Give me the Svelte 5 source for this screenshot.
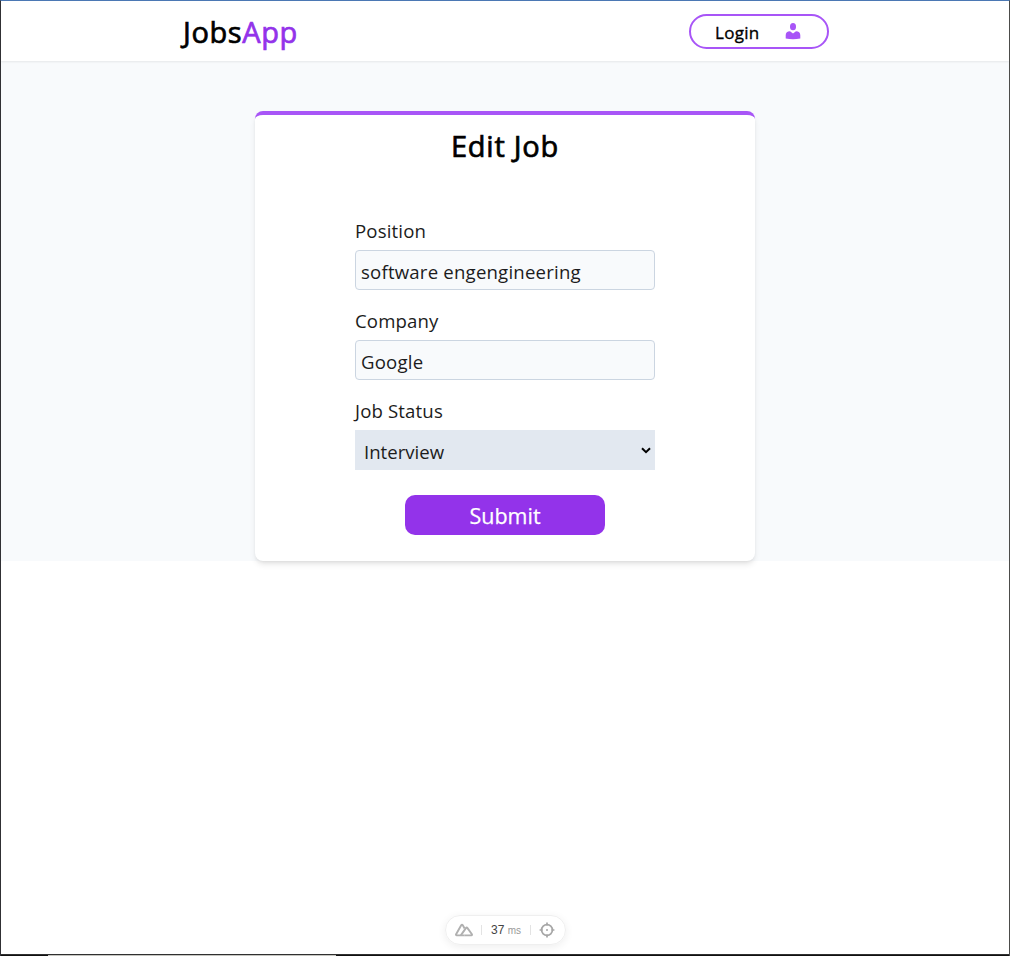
<script lang="ts">
  let position = $state('software engengineering');
  let company = $state('Google');
  let status = $state('Interview');
</script>

<div class="window">
  <header>
    <div class="brand">Jobs<span>App</span></div>
    <button class="login">
      <span>Login</span>
      <svg width="16" height="17" viewBox="0 0 16 17" fill="#a855f7">
        <ellipse cx="8" cy="3.7" rx="3" ry="3.6" />
        <path d="M.7 15.4V12.2C.7 9.5 2.3 8.4 5 8.2L8 10.5l3-2.3c2.7.2 4.3 1.3 4.3 4v3.2Q8 17 .7 15.4Z" />
      </svg>
    </button>
  </header>

  <main>
    <form onsubmit={(e) => e.preventDefault()}>
      <h1>Edit Job</h1>
      <div class="fields">
        <label for="position">Position</label>
        <input id="position" bind:value={position} />
        <label for="company">Company</label>
        <input id="company" bind:value={company} />
        <label for="status">Job Status</label>
        <div class="select">
          <select id="status" bind:value={status}>
            <option>Interview</option>
            <option>Pending</option>
            <option>Declined</option>
          </select>
          <svg width="10" height="7" viewBox="0 0 10 7" fill="none" stroke="#000" stroke-width="2">
            <path d="M1 1.2 5 5.2 9 1.2" />
          </svg>
        </div>
      </div>
      <button class="submit">Submit</button>
    </form>
  </main>

  <div class="devtools">
    <svg width="18" height="14" viewBox="0 0 18 14" fill="none" stroke="#b0b0b0" stroke-width="1.9" stroke-linejoin="round">
      <path d="M9.7 12.4H1.6Q.6 12.2 1.1 11.2L6.2 2.3Q7 1.1 7.8 2.3L9.6 5.4" />
      <path d="M5.8 12.4 10.9 5.1Q11.7 4 12.5 5.1L16.9 11.2Q17.3 12.2 16.3 12.4H9.7" />
    </svg>
    <i></i>
    <div class="time">37 <small>ms</small></div>
    <i></i>
    <svg width="16" height="16" viewBox="0 0 16 16" fill="none" stroke="#a6a6a6" stroke-width="1.7">
      <circle cx="8" cy="8" r="5.4" />
      <path d="M8 .6v3M8 12.4v3M.6 8h3M12.4 8h3" />
      <circle cx="8" cy="8" r="1" fill="#a6a6a6" stroke="none" />
    </svg>
  </div>
  <footer></footer>
</div>

<style>
  .window, .window * { box-sizing: border-box; }
  .window {
    height: 956px;
    display: flex;
    flex-direction: column;
    background: #fff;
    border-top: 1px solid #4b78b4;
    border-left: 1px solid #303034;
    border-right: 1px solid #4c4c4a;
    font-family: "Open Sans", "Noto Sans", sans-serif;
    color: #000;
    overflow: hidden;
  }
  header {
    height: 60px;
    flex: none;
    padding: 0 180px;
    display: flex;
    justify-content: space-between;
    align-items: center;
    position: relative;
    box-shadow: 0 1px 2px rgb(0 0 0 / 0.08);
  }
  .brand {
    font-size: 29px;
    line-height: 40px;
    margin-top: 1px;
    padding-left: 2px;
    letter-spacing: 0.6px;
    -webkit-text-stroke: 0.7px currentColor;
  }
  .brand span { color: #9333ea; }
  button, input, select { font-family: inherit; color: inherit; margin: 0; }
  .login {
    width: 140px;
    height: 35px;
    border: 2px solid #a855f7;
    border-radius: 18px;
    background: #fff;
    padding: 0 26px 0 24px;
    display: flex;
    justify-content: space-between;
    align-items: center;
    font-size: 17px;
    letter-spacing: 0.3px;
    -webkit-text-stroke: 0.35px currentColor;
    margin-top: 1px;
  }
  .login span { padding-top: 2px; line-height: 24px; }
  main {
    height: 500px;
    flex: none;
    background: #f8fafc;
    padding-top: 50px;
    display: flex;
    justify-content: center;
  }
  form {
    width: 500px;
    height: 450px;
    background: #fff;
    border-top: 4px solid #a855f7;
    border-radius: 8px;
    box-shadow: 0 4px 6px -1px rgb(0 0 0 / 0.1), 0 2px 4px -2px rgb(0 0 0 / 0.1);
    display: flex;
    flex-direction: column;
    align-items: center;
  }
  h1 {
    margin: 11px 0 0;
    font-size: 29px;
    line-height: 40px;
    font-weight: 400;
    letter-spacing: 0.75px;
    -webkit-text-stroke: 0.7px currentColor;
  }
  .fields {
    width: 300px;
    margin-top: 48px;
    display: flex;
    flex-direction: column;
    font-size: 18.6px;
    letter-spacing: 0.15px;
    color: #1c1c1c;
  }
  label { height: 36px; line-height: 34px; }
  input {
    height: 40px;
    margin-bottom: 14px;
    border: 1px solid #cbd5e1;
    border-radius: 4px;
    background: #f8fafc;
    padding: 3px 5px 0;
    font-size: 18.6px;
    letter-spacing: 0.2px;
    outline: none;
  }
  .select { height: 40px; display: grid; align-items: center; }
  select {
    grid-area: 1 / 1;
    appearance: none;
    width: 300px;
    height: 40px;
    border: 0;
    border-radius: 0;
    background: #e2e8f0;
    padding: 2px 9px 0;
    font-size: 18.6px;
  }
  .select svg { grid-area: 1 / 1; justify-self: end; margin-right: 4px; pointer-events: none; }
  .submit {
    width: 200px;
    height: 40px;
    margin-top: 25px;
    border: 0;
    border-radius: 10px;
    background: #9333ea;
    color: #fff;
    font-size: 21.5px;
    -webkit-text-stroke: 0.25px currentColor;
    padding: 1px 0 0;
  }
  .devtools {
    width: 121px;
    height: 30px;
    margin: auto auto 9px;
    flex: none;
    border: 1px solid #efefef;
    border-radius: 15px;
    box-shadow: 0 2px 8px rgb(0 0 0 / 0.07);
    display: flex;
    align-items: center;
    justify-content: space-between;
    padding: 0 9px;
    font-family: "Liberation Sans", sans-serif;
    font-size: 12px;
    color: #444;
  }
  .devtools i { width: 1px; height: 10px; background: #e3e3e3; }
  .time small { font-size: 10px; color: #999; }
  footer {
    height: 2px;
    flex: none;
    margin: 0 -1px;
    border-top: 1px solid #303030;
    background: linear-gradient(90deg, #111 48px, #c5c5c0 48px 336px, #111 336px);
  }
</style>
